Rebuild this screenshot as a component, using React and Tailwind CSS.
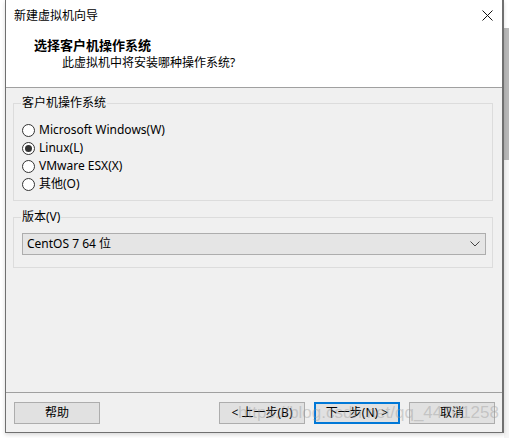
const font = { fontFamily: '"Noto Sans", "Noto Sans CJK SC", sans-serif' };

function Radio({ label, checked = false }) {
  return (
    <label className="flex h-[18px] items-center gap-[4px] text-[12px] text-[#000]">
      <span className="flex h-[13px] w-[13px] items-center justify-center rounded-full border border-[#333] bg-white">
        {checked && <span className="h-[7px] w-[7px] rounded-full bg-[#333]" />}
      </span>
      <span>{label}</span>
    </label>
  );
}

function Group({ title, className = "", children }) {
  return (
    <fieldset className={`ml-[7px] mr-[9px] border border-[#dcdcdc] px-[8px] ${className}`}>
      <legend className="-ml-[1px] px-[1px] text-[12px] leading-[16px] text-[#000]">{title}</legend>
      {children}
    </fieldset>
  );
}

function Button({ children, primary = false }) {
  return (
    <button
      className={`flex h-[22px] w-[86px] items-center justify-center bg-[#e1e1e1] text-[12px] text-[#000] ${
        primary ? "border-2 border-[#0078d7]" : "border border-[#adadad]"
      }`}
    >
      {children}
    </button>
  );
}

export default function App() {
  return (
    <div className="flex h-[438px] w-[509px] overflow-hidden bg-white" style={font}>
      <div className="w-[5px]" />
      <div className="relative flex h-[433px] w-[499px] flex-col border-b border-l border-r-2 border-[#707070] bg-[#f0f0f0] shadow-[0_2px_4px_rgba(0,0,0,0.15)]">
        {/* title bar */}
        <div className="flex h-[31px] items-center justify-between bg-white pl-[8px] pr-[9px]">
          <span className="text-[12px] text-[#000]">新建虚拟机向导</span>
          <svg width="11" height="11" viewBox="0 0 11 11">
            <path d="M0.5 0.5 L10.5 10.5 M10.5 0.5 L0.5 10.5" stroke="#111" strokeWidth="1" />
          </svg>
        </div>
        {/* header */}
        <div className="flex h-[57px] flex-col border-b border-[#a0a0a0] bg-white pl-[28px] pt-[5px]">
          <div className="text-[13px] font-bold leading-[18px] text-[#000]">选择客户机操作系统</div>
          <div className="pl-[28px] text-[12px] leading-[18px] text-[#000]">此虚拟机中将安装哪种操作系统?</div>
        </div>
        {/* body */}
        <div className="flex flex-1 flex-col pt-[7px]">
          <Group title="客户机操作系统" className="pb-[7px]">
            <div className="flex flex-col pt-[10px]">
              <Radio label="Microsoft Windows(W)" />
              <Radio label="Linux(L)" checked />
              <Radio label="VMware ESX(X)" />
              <Radio label="其他(O)" />
            </div>
          </Group>
          <Group title="版本(V)" className="mt-[8px] pb-[12px] pr-[6px]">
            <div className="mt-[8px] flex h-[22px] items-center justify-between border border-[#adadad] bg-[#e5e5e5] pl-[4px] pr-[5px] text-[12px] text-[#000]">
              <span>CentOS 7 64 位</span>
              <svg width="10" height="6" viewBox="0 0 10 6">
                <path d="M0.5 0.5 L5 5 L9.5 0.5" fill="none" stroke="#444" strokeWidth="1" />
              </svg>
            </div>
          </Group>
        </div>
        {/* footer */}
        <div className="flex h-[40px] items-start border-t border-[#a0a0a0] pl-[8px] pr-[7px] pt-[9px]">
          <Button>帮助</Button>
          <div className="ml-auto flex gap-[9px]">
            <Button>&lt; 上一步(B)</Button>
            <Button primary>下一步(N) &gt;</Button>
            <Button>取消</Button>
          </div>
        </div>
        {/* csdn watermark */}
        <div
          className="pointer-events-none absolute bottom-[7px] right-[3px] text-[17px] text-[rgba(150,150,150,0.4)]"
          style={{ fontFamily: '"Liberation Sans", sans-serif' }}
        >
          https://blog.csdn.net/qq_44701258
        </div>
      </div>
      <div className="flex flex-1 flex-col">
        <div className="h-[28px] bg-white" />
        <div className="h-[132px] bg-[#b8b8b8]" />
        <div className="flex-1 bg-[#f5f5f5]" />
      </div>
    </div>
  );
}
